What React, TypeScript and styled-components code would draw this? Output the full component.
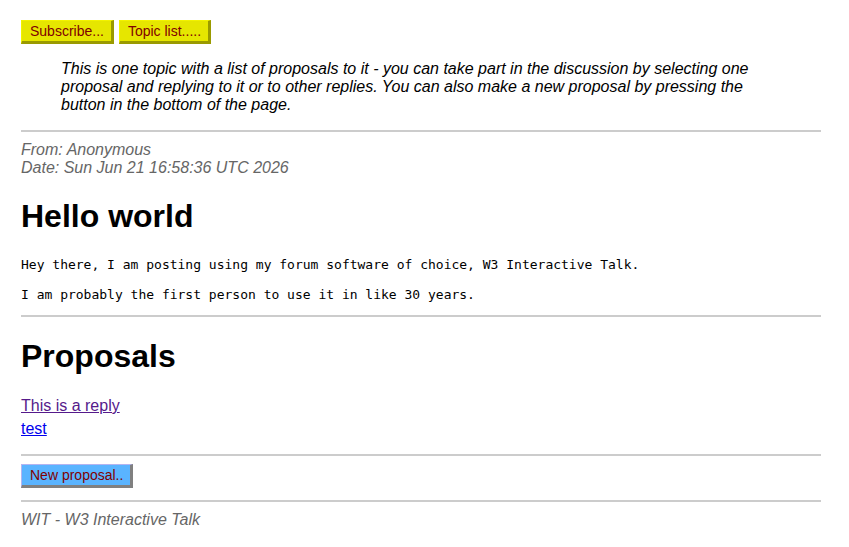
import React from 'react';
import styled, { createGlobalStyle } from 'styled-components';

const GlobalStyle = createGlobalStyle`
  body {
    margin: 0;
    background: #ffffff;
    font-family: "Liberation Sans", Arial, sans-serif;
    color: #000000;
  }
`;

const Page = styled.div`
  width: 800px;
  padding: 20px 0 0 21px;
`;

const Toolbar = styled.div`
  display: flex;
  gap: 5px;
`;

const Button = styled.button<{ $tone: 'yellow' | 'blue' }>`
  height: 24px;
  padding: 0 7px 0 8px;
  font-family: "Liberation Sans", Arial, sans-serif;
  font-size: 14px;
  color: #800000;
  background: ${(p) => (p.$tone === 'yellow' ? '#e6e600' : '#5ab4ff')};
  border-style: solid;
  border-width: 1px 3px 3px 1px;
  border-color: ${(p) =>
    p.$tone === 'yellow'
      ? '#f2f200 #9a9a00 #9a9a00 #f2f200'
      : '#b4b4f0 #808080 #808080 #b4b4f0'};
  cursor: pointer;
`;

const Intro = styled.p`
  margin: 16px 40px 0 40px;
  font-size: 16px;
  line-height: 18px;
  font-style: italic;
`;

const Rule = styled.hr<{ $top: number; $bottom: number }>`
  margin: ${(p) => p.$top}px 0 ${(p) => p.$bottom}px;
  border: none;
  border-top: 2px solid #cccccc;
  height: 0;
`;

const Meta = styled.div`
  font-style: italic;
  color: #666666;
  font-size: 16px;
  line-height: 18px;
`;

const Heading = styled.h1`
  margin: 21px 0;
  font-size: 32px;
  line-height: 37px;
  font-weight: bold;
`;

const Body = styled.pre`
  margin: 13px 0 12px;
  font-family: "DejaVu Sans Mono", monospace;
  font-size: 13px;
  line-height: 17px;
`;

const LinkList = styled.div`
  display: flex;
  flex-direction: column;
  font-size: 16px;
  line-height: 23px;
  margin-top: -2px;
`;

const Link = styled.a<{ $visited?: boolean }>`
  color: ${(p) => (p.$visited ? '#551a8b' : '#0000ee')};
  text-decoration: underline;
  align-self: flex-start;
`;

const Footer = styled.div`
  margin-top: 9px;
  font-style: italic;
  color: #666666;
  font-size: 16px;
  line-height: 18px;
`;

export default function App() {
  return (
    <>
      <GlobalStyle />
      <Page>
        <Toolbar>
          <Button $tone="yellow">Subscribe...</Button>
          <Button $tone="yellow">Topic list.....</Button>
        </Toolbar>
        <Intro>
          This is one topic with a list of proposals to it - you can take part in the
          discussion by selecting one proposal and replying to it or to other replies. You
          can also make a new proposal by pressing the button in the bottom of the page.
        </Intro>
        <Rule $top={16} $bottom={9} />
        <Meta>
          From: Anonymous
          <br />
          Date: Sun Jun 21 16:58:36 UTC 2026
        </Meta>
        <Heading>Hello world</Heading>
        <Body>Hey there, I am posting using my forum software of choice, W3 Interactive Talk.</Body>
        <Body>I am probably the first person to use it in like 30 years.</Body>
        <Rule $top={0} $bottom={0} />
        <Heading>Proposals</Heading>
        <LinkList>
          <Link $visited href="#">This is a reply</Link>
          <Link href="#">test</Link>
        </LinkList>
        <Rule $top={14} $bottom={8} />
        <Button $tone="blue">New proposal..</Button>
        <Rule $top={12} $bottom={0} />
        <Footer>WIT - W3 Interactive Talk</Footer>
      </Page>
    </>
  );
}
